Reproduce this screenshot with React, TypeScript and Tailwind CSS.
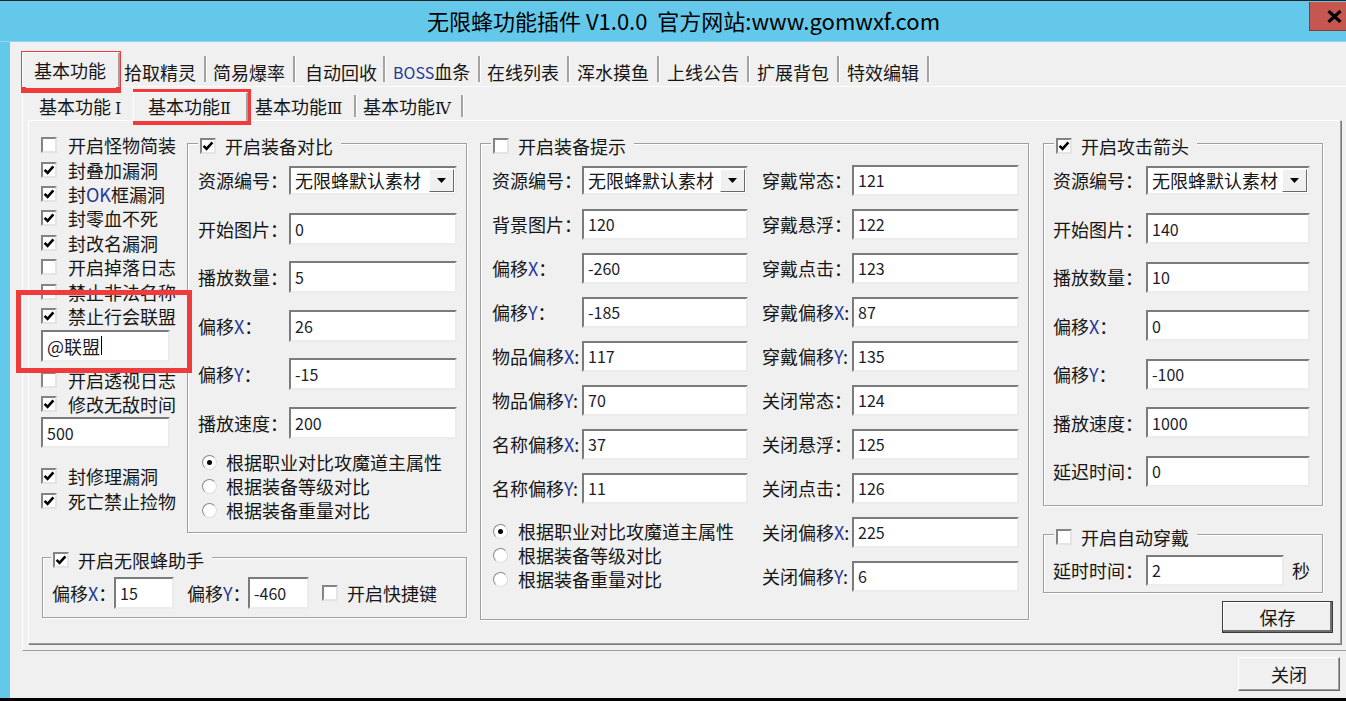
import React from "react";

type Kids = { children?: React.ReactNode };

// latin letters in the dialog render bluish (cleartype), keep that look
function Lx({ children }: Kids) {
  return <span className="text-[#27389a]">{children}</span>;
}

function Check({ on = false }: { on?: boolean }) {
  return (
    <span className="w-[16px] h-[16px] shrink-0 bg-white border-2 border-t-[#848484] border-l-[#848484] border-b-[#e4e4e4] border-r-[#e4e4e4] flex items-center justify-center">
      {on && (
        <svg viewBox="0 0 12 12" className="w-[12px] h-[12px]">
          <path d="M1.6 5.8 L4.6 8.9 L10.4 2.4" fill="none" stroke="#000" strokeWidth="2.6" />
        </svg>
      )}
    </span>
  );
}

function Radio({ on = false }: { on?: boolean }) {
  return (
    <span className="w-[15px] h-[15px] shrink-0 rounded-full bg-white border border-t-[#8a8a8a] border-l-[#8a8a8a] border-b-[#dcdcdc] border-r-[#dcdcdc] flex items-center justify-center">
      {on && <span className="w-[5px] h-[5px] rounded-full bg-black" />}
    </span>
  );
}

function Field({ value, className, caret }: { value: string; className: string; caret?: boolean }) {
  return (
    <div
      className={`shrink-0 bg-white border-2 border-t-[#7b7b7b] border-l-[#7b7b7b] border-b-[#ececec] border-r-[#ececec] pl-[4px] flex items-center text-[#1c1c2c] whitespace-nowrap ${className}`}
    >
      {value}
      {caret && <span className="w-[1px] h-[19px] bg-black ml-[1px]" />}
    </div>
  );
}

function Select({ className }: { className: string }) {
  return (
    <div
      className={`shrink-0 h-[29px] bg-white border-2 border-t-[#7b7b7b] border-l-[#7b7b7b] border-b-[#ececec] border-r-[#ececec] flex items-center ${className}`}
    >
      <span className="flex-1 min-w-0 pl-[4px] text-[18px] leading-[18px] whitespace-nowrap">无限蜂默认素材</span>
      <span className="w-[25px] h-[23px] shrink-0 mr-[1px] bg-[#f0f0f0] border border-t-white border-l-white border-b-[#696969] border-r-[#696969] flex items-center justify-center">
        <svg width="9" height="5" viewBox="0 0 9 5">
          <path d="M0 0H9L4.5 5Z" fill="#000" />
        </svg>
      </span>
    </div>
  );
}

function Label({ children, className = "" }: Kids & { className?: string }) {
  return <span className={`shrink-0 whitespace-nowrap text-[18px] leading-[18px] ${className}`}>{children}</span>;
}

function GroupBox({
  title,
  on,
  className,
  legendClass = "ml-[10px] pl-[2px]",
  children,
}: Kids & { title: string; on?: boolean; className: string; legendClass?: string }) {
  return (
    <fieldset className={`border border-[#a0a0a0] shadow-[inset_1px_1px_0_#fff,1px_1px_0_#fff] ${className}`}>
      <legend className={`pr-[8px] pt-[6px] h-[24px] bg-[#f0f0f0] flex items-center gap-[9px] ${legendClass}`}>
        <Check on={on} />
        <Label>{title}</Label>
      </legend>
      {children}
    </fieldset>
  );
}

function Row({ label, children, labelW }: Kids & { label: React.ReactNode; labelW: string }) {
  return (
    <div className="flex items-center h-[32px]">
      <Label className={labelW}>{label}</Label>
      {children}
    </div>
  );
}

function LeftCheck({ on, children }: Kids & { on?: boolean }) {
  return (
    <div className="h-[24.4px] flex items-center gap-[11px]">
      <Check on={on} />
      <Label>{children}</Label>
    </div>
  );
}

function RadioRow({ on, children, gap }: Kids & { on?: boolean; gap: string }) {
  return (
    <div className={`h-[24px] flex items-center ${gap}`}>
      <Radio on={on} />
      <Label>{children}</Label>
    </div>
  );
}

const topTabs: { t: React.ReactNode; cls: string }[] = [
  { t: "拾取精灵", cls: "w-[84px] pl-[4px]" },
  { t: "简易爆率", cls: "w-[87px] pl-[7px]" },
  { t: "自动回收", cls: "w-[88px] pl-[10px]" },
  { t: <><span className="text-[#27389a] text-[16px]">BOSS</span>血条</>, cls: "w-[93px] pl-[8px]" },
  { t: "在线列表", cls: "w-[87px] pl-[7px]" },
  { t: "浑水摸鱼", cls: "w-[88px] pl-[8px]" },
  { t: "上线公告", cls: "w-[88px] pl-[8px]" },
  { t: "扩展背包", cls: "w-[88px] pl-[8px]" },
  { t: "特效编辑", cls: "w-[88px] pl-[8px]" },
];

function Sep({ h }: { h: string }) {
  return <span className={`w-[2px] shrink-0 bg-[#a3a3a3] shadow-[1px_0_0_#fff] self-center ${h}`} />;
}

function Roman({ children }: Kids) {
  return <span className="font-['DejaVu_Serif','Liberation_Serif',serif] text-[16px]">{children}</span>;
}

const F = "w-[166px] h-[31px] text-[16px] leading-[16px]";
const R = "w-[167px] h-[31px] text-[16px] leading-[16px]";
const A = "w-[168px] h-[32px] text-[16px] leading-[16px]";
const D = "w-[164px] h-[31px] text-[16px] leading-[16px]";

export default function App() {
  return (
    <div className="relative w-[1346px] h-[701px] overflow-hidden bg-black flex flex-col font-['Noto_Sans_CJK_SC','Noto_Sans_CJK_JP',sans-serif] text-[#161616]">
      <div className="h-[1px] bg-[#222]" />
      {/* title bar */}
      <div className="h-[41px] bg-[#64c8ea] flex border-b border-b-[#8fd6ef]">
        <div className="flex-1 flex items-center justify-center pl-[58px] pb-[3px] text-[22px] leading-[24px] text-black whitespace-pre">
          {"无限蜂功能插件 V1.0.0  官方网站:www.gomwxf.com"}
        </div>
        <div className="w-[37px] h-[29px] mt-[1px] bg-[#c55650] border-l border-b border-[#8a3b36] flex items-center justify-end pr-[4px]">
          <svg width="15" height="13" viewBox="0 0 15 13">
            <path d="M1.5 1 L13.5 12 M13.5 1 L1.5 12" stroke="#000" strokeWidth="3.2" />
          </svg>
        </div>
      </div>

      <div className="flex-1 flex min-h-0">
        <div className="w-[10px] bg-[#64c8ea]" />
        <div className="flex-1 bg-[#f0f0f0] flex flex-col pt-[10px]">
          {/* main tabs */}
          <div className="h-[34px] pl-[12px] flex items-end">
            <div className="relative z-10 -mb-[1px] w-[98px] h-[35px] pl-[11px] flex items-center bg-[#f0f0f0] border-t border-l border-white border-r-2 border-r-[#a0a0a0]">
              <Label>基本功能</Label>
            </div>
            {topTabs.map((tab, i) => (
              <React.Fragment key={i}>
                <div className={`h-[29px] flex items-center ${tab.cls}`}>
                  <Label>{tab.t}</Label>
                </div>
                <Sep h="h-[26px]" />
              </React.Fragment>
            ))}
          </div>

          {/* outer tab page */}
          <div className="ml-[12px] h-[565px] border-t border-l border-white border-b border-b-[#9c9c9c] pl-[5px] pt-[4px] flex flex-col">
            <div className="h-[29px] flex items-end">
              <div className="w-[105px] h-[25px] pl-[11px] flex items-center">
                <Label>基本功能 <Roman>Ⅰ</Roman></Label>
              </div>
              <div className="relative z-10 -mb-[1px] w-[115px] h-[29px] pl-[14px] flex items-center bg-[#f0f0f0] border-t border-l border-white border-r-2 border-r-[#a0a0a0]">
                <Label>基本功能<Roman>Ⅱ</Roman></Label>
              </div>
              <div className="w-[106px] h-[25px] pl-[7px] flex items-center">
                <Label>基本功能<Roman>Ⅲ</Roman></Label>
              </div>
              <Sep h="h-[22px]" />
              <div className="w-[105px] h-[25px] pl-[7px] flex items-center">
                <Label>基本功能<Roman>Ⅳ</Roman></Label>
              </div>
              <Sep h="h-[22px]" />
            </div>

            {/* inner tab page */}
            <div className="w-[1313px] h-[524px] border border-t-white border-l-white border-b-[#a0a0a0] border-r-[#a0a0a0] shadow-[1px_1px_0_#7a7a7a] pt-[10px] pl-[12px] flex">
              {/* left section */}
              <div className="w-[426px] shrink-0 flex flex-col">
                <div className="flex">
                  <div className="w-[146px] shrink-0 pt-[2px] flex flex-col">
                    <LeftCheck>开启怪物简装</LeftCheck>
                    <LeftCheck on>封叠加漏洞</LeftCheck>
                    <LeftCheck on>封<Lx>OK</Lx>框漏洞</LeftCheck>
                    <LeftCheck on>封零血不死</LeftCheck>
                    <LeftCheck on>封改名漏洞</LeftCheck>
                    <LeftCheck>开启掉落日志</LeftCheck>
                    <LeftCheck>禁止非法名称</LeftCheck>
                    <LeftCheck on>禁止行会联盟</LeftCheck>
                    <Field value="@联盟" caret className="mt-[1.6px] w-[129px] h-[32px] text-[18px] leading-[18px]" />
                    <div className="h-[5.8px]" />
                    <LeftCheck>开启透视日志</LeftCheck>
                    <LeftCheck on>修改无敌时间</LeftCheck>
                    <Field value="500" className="mt-[1px] w-[129px] h-[31px] text-[16px] leading-[16px]" />
                    <div className="h-[15.8px]" />
                    <LeftCheck on>封修理漏洞</LeftCheck>
                    <LeftCheck on>死亡禁止捡物</LeftCheck>
                  </div>

                  <GroupBox title="开启装备对比" on className="w-[280px] shrink-0">
                    <div className="pt-[9px] pl-[10px] pr-[9px] pb-[10px] flex flex-col">
                      <div className="flex flex-col gap-[16.5px]">
                        <Row label="资源编号：" labelW="w-[91px]">
                          <Select className="w-[168px]" />
                        </Row>
                        <Row label="开始图片：" labelW="w-[91px]">
                          <Field value="0" className={A} />
                        </Row>
                        <Row label="播放数量：" labelW="w-[91px]">
                          <Field value="5" className={A} />
                        </Row>
                        <Row label={<>偏移<Lx>X</Lx>：</>} labelW="w-[91px]">
                          <Field value="26" className={A} />
                        </Row>
                        <Row label={<>偏移<Lx>Y</Lx>：</>} labelW="w-[91px]">
                          <Field value="-15" className={A} />
                        </Row>
                        <Row label="播放速度：" labelW="w-[91px]">
                          <Field value="200" className={A} />
                        </Row>
                      </div>
                      <div className="mt-[11.5px] pl-[4px] flex flex-col">
                        <RadioRow on gap="gap-[9px]">根据职业对比攻魔道主属性</RadioRow>
                        <RadioRow gap="gap-[9px]">根据装备等级对比</RadioRow>
                        <RadioRow gap="gap-[9px]">根据装备重量对比</RadioRow>
                      </div>
                    </div>
                  </GroupBox>
                </div>

                <GroupBox title="开启无限蜂助手" on className="mt-[12px] ml-[1px] w-[425px]" legendClass="ml-[8px] pl-[2px]">
                  <div className="pt-[8px] pl-[9px] pb-[8px] flex items-center h-[48px]">
                    <Label className="w-[62px]">偏移<Lx>X</Lx>：</Label>
                    <Field value="15" className="w-[60px] h-[32px] text-[16px] leading-[16px]" />
                    <Label className="ml-[13px] w-[61px]">偏移<Lx>Y</Lx>：</Label>
                    <Field value="-460" className="w-[61px] h-[32px] text-[16px] leading-[16px]" />
                    <span className="ml-[13px] flex">
                      <Check />
                    </span>
                    <Label className="ml-[9px]">开启快捷键</Label>
                  </div>
                </GroupBox>
              </div>

              {/* equipment tips */}
              <GroupBox title="开启装备提示" className="ml-[13px] w-[549px] shrink-0 self-start">
                <div className="pt-[9px] pl-[11px] pb-[27px] flex">
                  <div className="flex flex-col">
                    <div className="flex flex-col gap-[12px]">
                      <Row label="资源编号：" labelW="w-[90px]">
                        <Select className="w-[166px]" />
                      </Row>
                      <Row label="背景图片：" labelW="w-[90px]">
                        <Field value="120" className={F} />
                      </Row>
                      <Row label={<>偏移<Lx>X</Lx>：</>} labelW="w-[90px]">
                        <Field value="-260" className={F} />
                      </Row>
                      <Row label={<>偏移<Lx>Y</Lx>：</>} labelW="w-[90px]">
                        <Field value="-185" className={F} />
                      </Row>
                      <Row label={<>物品偏移<Lx>X</Lx>:</>} labelW="w-[90px]">
                        <Field value="117" className={F} />
                      </Row>
                      <Row label={<>物品偏移<Lx>Y</Lx>:</>} labelW="w-[90px]">
                        <Field value="70" className={F} />
                      </Row>
                      <Row label={<>名称偏移<Lx>X</Lx>:</>} labelW="w-[90px]">
                        <Field value="37" className={F} />
                      </Row>
                      <Row label={<>名称偏移<Lx>Y</Lx>:</>} labelW="w-[90px]">
                        <Field value="11" className={F} />
                      </Row>
                    </div>
                    <div className="mt-[15px] pl-[1px] flex flex-col">
                      <RadioRow on gap="gap-[10px]">根据职业对比攻魔道主属性</RadioRow>
                      <RadioRow gap="gap-[10px]">根据装备等级对比</RadioRow>
                      <RadioRow gap="gap-[10px]">根据装备重量对比</RadioRow>
                    </div>
                  </div>
                  <div className="ml-[14px] flex flex-col gap-[12px]">
                    <Row label="穿戴常态：" labelW="w-[90px]">
                      <Field value="121" className={R} />
                    </Row>
                    <Row label="穿戴悬浮：" labelW="w-[90px]">
                      <Field value="122" className={R} />
                    </Row>
                    <Row label="穿戴点击：" labelW="w-[90px]">
                      <Field value="123" className={R} />
                    </Row>
                    <Row label={<>穿戴偏移<Lx>X</Lx>:</>} labelW="w-[90px]">
                      <Field value="87" className={R} />
                    </Row>
                    <Row label={<>穿戴偏移<Lx>Y</Lx>:</>} labelW="w-[90px]">
                      <Field value="135" className={R} />
                    </Row>
                    <Row label="关闭常态：" labelW="w-[90px]">
                      <Field value="124" className={R} />
                    </Row>
                    <Row label="关闭悬浮：" labelW="w-[90px]">
                      <Field value="125" className={R} />
                    </Row>
                    <Row label="关闭点击：" labelW="w-[90px]">
                      <Field value="126" className={R} />
                    </Row>
                    <Row label={<>关闭偏移<Lx>X</Lx>:</>} labelW="w-[90px]">
                      <Field value="225" className={R} />
                    </Row>
                    <Row label={<>关闭偏移<Lx>Y</Lx>:</>} labelW="w-[90px]">
                      <Field value="6" className={R} />
                    </Row>
                  </div>
                </div>
              </GroupBox>

              {/* right section */}
              <div className="ml-[14px] w-[290px] shrink-0 flex flex-col">
                <GroupBox title="开启攻击箭头" on className="w-[280px]">
                  <div className="pt-[9px] pl-[9px] pb-[18px] flex flex-col gap-[16.5px]">
                    <Row label="资源编号：" labelW="w-[93px]">
                      <Select className="w-[164px]" />
                    </Row>
                    <Row label="开始图片：" labelW="w-[93px]">
                      <Field value="140" className={D} />
                    </Row>
                    <Row label="播放数量：" labelW="w-[93px]">
                      <Field value="10" className={D} />
                    </Row>
                    <Row label={<>偏移<Lx>X</Lx>：</>} labelW="w-[93px]">
                      <Field value="0" className={D} />
                    </Row>
                    <Row label={<>偏移<Lx>Y</Lx>：</>} labelW="w-[93px]">
                      <Field value="-100" className={D} />
                    </Row>
                    <Row label="播放速度：" labelW="w-[93px]">
                      <Field value="1000" className={D} />
                    </Row>
                    <Row label="延迟时间：" labelW="w-[93px]">
                      <Field value="0" className={D} />
                    </Row>
                  </div>
                </GroupBox>

                <GroupBox title="开启自动穿戴" className="mt-[16px] w-[280px]">
                  <div className="pt-[8px] pl-[9px] pb-[6px] flex items-center">
                    <Row label="延时时间：" labelW="w-[93px]">
                      <Field value="2" className="w-[138px] h-[31px] text-[16px] leading-[16px]" />
                      <Label className="ml-[8px]">秒</Label>
                    </Row>
                  </div>
                </GroupBox>

                <div className="mt-[8px] self-end w-[111px] h-[32px] bg-[#f0f0f0] border border-[#3a3a3a] shadow-[inset_-2px_-2px_0_#707070,inset_1px_1px_0_#fff] flex items-center justify-center">
                  <Label>保存</Label>
                </div>
              </div>
            </div>
          </div>

          <div className="mt-[6px] mr-[6px] self-end w-[102px] h-[34px] bg-[#f0f0f0] border border-t-white border-l-white border-b-[#696969] border-r-[#696969] shadow-[inset_-1px_-1px_0_#a0a0a0] flex items-center justify-center">
            <Label>关闭</Label>
          </div>
        </div>
      </div>
      <div className="h-[3px] bg-black" />

      {/* red annotation boxes drawn over the dialog */}
      <div className="absolute left-[21px] top-[51px] w-[100px] h-[42px] border-[5px] border-[#ef3b3b]" />
      <div className="absolute left-[133px] top-[89px] w-[118px] h-[36px] border-[5px] border-[#ef3b3b]" />
      <div className="absolute left-[16px] top-[290px] w-[176px] h-[83px] border-[5px] border-[#ef3b3b]" />
    </div>
  );
}
